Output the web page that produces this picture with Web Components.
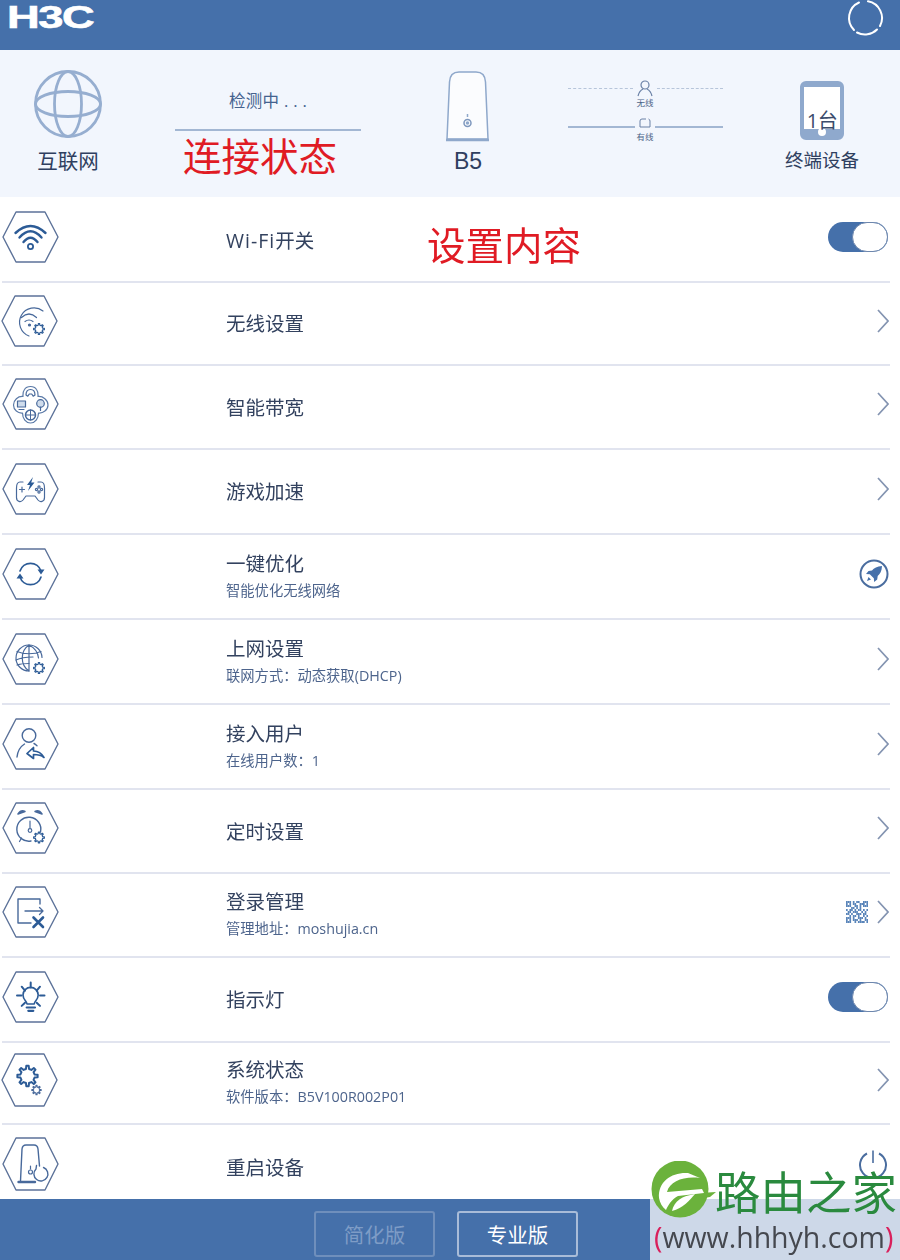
<!DOCTYPE html>
<html lang="zh"><head><meta charset="utf-8"><title>H3C B5</title>
<style>
html,body{margin:0;padding:0;background:#fff}
body{font-family:"Open Sans","Noto Sans CJK SC",sans-serif;color:#2f3f60}
</style></head><body>
<x-app>
  <x-topbar slot="top">H3C</x-topbar>
  <x-status slot="status"></x-status>
  <x-row icon="wifi" annot><span><span style="letter-spacing:1px">Wi-Fi</span>开关</span><x-note slot="annot">设置内容</x-note><x-toggle slot="control"></x-toggle></x-row>
  <x-row icon="wifigear"><span>无线设置</span><x-chevron slot="control"></x-chevron></x-row>
  <x-row icon="bandwidth"><span>智能带宽</span><x-chevron slot="control"></x-chevron></x-row>
  <x-row icon="game"><span>游戏加速</span><x-chevron slot="control"></x-chevron></x-row>
  <x-row icon="sync"><span>一键优化</span><span slot="sub">智能优化无线网络</span><x-glyph slot="control" name="rocket"></x-glyph></x-row>
  <x-row icon="globe"><span>上网设置</span><span slot="sub">联网方式：动态获取(DHCP)</span><x-chevron slot="control"></x-chevron></x-row>
  <x-row icon="user"><span>接入用户</span><span slot="sub">在线用户数：1</span><x-chevron slot="control"></x-chevron></x-row>
  <x-row icon="clock"><span>定时设置</span><x-chevron slot="control"></x-chevron></x-row>
  <x-row icon="login"><span>登录管理</span><span slot="sub">管理地址：moshujia.cn</span><x-glyph slot="control" name="qr"></x-glyph><x-chevron slot="control"></x-chevron></x-row>
  <x-row icon="bulb"><span>指示灯</span><x-toggle slot="control"></x-toggle></x-row>
  <x-row icon="gears"><span>系统状态</span><span slot="sub">软件版本：B5V100R002P01</span><x-chevron slot="control"></x-chevron></x-row>
  <x-row icon="reboot" last><span>重启设备</span><x-glyph slot="control" name="power"></x-glyph></x-row>
  <x-footer slot="footer"></x-footer>
  <x-watermark slot="over"></x-watermark>
</x-app>
<script>
/* A toothed gear outline: eight teeth between the radii ri and ro. */
const gear=(x,y,ri,ro,w=1.2,col='#2c5b96')=>{
  const pts=[];const n=8;
  for(let i=0;i<n;i++){
    const a=i/n*2*Math.PI, d=Math.PI/n*.5;
    [[ri,a-d*1.1],[ro,a-d*.6],[ro,a+d*.6],[ri,a+d*1.1]].forEach(([r,t])=>pts.push((x+r*Math.cos(t)).toFixed(2)+' '+(y+r*Math.sin(t)).toFixed(2)));
  }
  return `<path d="M${pts.join('L')}Z" stroke="${col}" stroke-width="${w}"/>`;
};
const ICONS={
wifi:`<g stroke="#2c5b96" stroke-width="2.400"><path d="M12.500 21Q27.500 7 42.500 21"/><path d="M16.500 25.500Q27.500 13 38.500 25.500"/><path d="M20.500 30Q27.500 21.500 34.500 30"/><circle cx="27.500" cy="34.500" r="2.600" stroke-width="1.800"/></g>`,
wifigear:`<path d="M41 15A14.500 14.500 0 1 0 27 40"/><path d="M19.500 21.500Q27 14.500 34.500 21.500M23 25.500Q27 22.500 31 25.500"/><circle cx="27.500" cy="29" r="1" fill="#48699b"/>${gear(37,33,3.800,5.400,1.200)}`,
bandwidth:`<path d="M21.500 10.500C24 6.500 31 6.500 33.500 10.500C35.500 13 35 15 35 17.500C40 17 45 21 45 26C45 31 40 34.500 35.500 34C35.500 39.500 32 44 27.500 44C23 44 19.500 39.500 19.500 34C15 34.500 10.500 31 10.500 26C10.500 21 15 17 20 17.500C20 15 19.500 13 21.500 10.500Z" stroke="#5c7ba8"/><path d="M23 16c0-4 2-5.500 4.500-5.500s4.500 1.500 4.500 5.500l-1.800 1.200-1.500-2.200h-2.400l-1.500 2.200z"/><rect x="14.500" y="22" width="8" height="6" fill="#cfdcec"/><path d="M16 30.500h5"/><circle cx="37.500" cy="24.500" r="3.800" fill="#cfdcec"/><path d="M37.500 28v3.500"/><circle cx="27.500" cy="36" r="5" stroke-width="1.500"/><path d="M27.500 31v10M22.500 36h10" stroke-width="1"/>`,
game:`<path d="M20 18h-3C14 18 13.500 21 13.500 24V33.500C13.500 38 18 38.500 20 36L23 32H32L35 36C37 38.500 41.500 38 41.500 33.500V24C41.500 21 41 18 38 18H35"/><path d="M16.500 25.500h5M19 23v5"/><circle cx="36" cy="23" r="1.100"/><circle cx="36" cy="28" r="1.100"/><circle cx="33.500" cy="25.500" r="1.100"/><circle cx="38.500" cy="25.500" r="1.100"/><path d="M30 13l-6 8h3l-2 6 6.500-8.500h-3.300z" fill="#2c5b96" stroke="none"/>`,
sync:`<g stroke="#2c5b96" stroke-width="1.700"><path d="M17 22A11 11 0 0 1 38 22"/><path d="M38 28A11 11 0 0 1 17 28"/></g><path d="M34.500 20.500h7l-3.500 5zM13.500 29.500h7l-3.500-5z" fill="#2c5b96" stroke="none"/>`,
globe:`<path d="M39 23.500A13 13 0 1 0 26 37"/><path d="M26 11v26M14 17.500c7 3 17 3 24 0M13 26c5-2.500 11-3 17-3M26 11c-9 6-9 20 0 26M26 11c6 3 9 8 9.500 13"/><path d="M14 31c3-1 8-1.500 12-1.500"/>${gear(36,34,3.800,5.400,1.200)}`,
user:`<circle cx="26" cy="16.500" r="6.800" stroke-width="1.400"/><path d="M14 38c.7-6 3.500-10.500 7.500-13M31 24.500c1 .5 2 1.300 3 2.200" stroke-width="1.400"/><path d="M24 34.500l6.500-6v3.500c4.500 0 8 2 10.500 6.500-3-2.500-6-3-10.500-3v4z" stroke="#2c5b96" stroke-width="1.700"/>`,
clock:`<path d="M37.500 29A12 12 0 1 0 28 38" stroke-width="1.400"/><path d="M27 18v7"/><circle cx="27" cy="27.500" r="1.800"/><path d="M15 11c2-3 5-3.500 7-2.500zM39 11c-2-3-5-3.500-7-2.500z" stroke-width="1.500"/><path d="M18.500 35l-2 3.500"/>${gear(36,34.500,3.800,5.400,1.200)}`,
login:`<path d="M37 17V12H15V36H28" stroke-width="1.400"/><path d="M22 24H40M36.500 20.500L40 24l-3.500 3.500" stroke-width="1.300"/><path d="M30.500 30.500l9.500 9.500M40 30.500l-9.500 9.500" stroke="#2c5b96" stroke-width="2.600"/>`,
bulb:`<g stroke="#2c5b96"><path d="M24 32c0-3-4-4-4-9a7.600 7.600 0 0 1 15.200 0c0 5-4 6-4 9z" stroke-width="1.600"/><path d="M23.700 35.500h8.300M25.300 38.800h5" stroke-width="2.200"/><g stroke-width="2"><path d="M27.700 10.500v5M18.700 14.700l3.300 4M37 14.700l-3.300 4M14 23.500h4.500M37 23.500h4.500M18.700 33.900l3.300-3.200M37 33.900l-3.300-3.200"/></g></g>`,
gears:`${gear(25.500,22,7.200,10.200,2)}${gear(34.500,36,3,4.700,1.100,'#48699b')}`,
reboot:`<path d="M17.500 43L19 11Q19.500 7 23 7H31Q34.500 7 35 11L36.500 28" stroke-width="1.400"/><path d="M15.500 44H32" stroke-width="2.400"/><circle cx="27.500" cy="34" r="2"/><path d="M27.500 28v3"/><path d="M33 31A7 7 0 1 0 40.500 29.500M33 31l.5-3.500" stroke-width="1.400"/>`
};
function def(name,css,html,extra){
  customElements.define(name,class extends HTMLElement{
    constructor(){super();const s=this.attachShadow({mode:'open'});s.innerHTML=`<style>${css}</style>${typeof html==='function'?html(this):html}`;}
    connectedCallback(){if(extra)extra(this)}
  });
}
def('x-app',`:host{display:block;width:900px;height:1260px;position:relative;overflow:hidden;filter:blur(.35px)}
.p{display:grid;grid-template-rows:50px 147px 1002px 61px;height:100%}
main{display:grid;grid-template-rows:86px 83px 84px 85px 85px 85px 85px 84px 84px 85px 82px 84px;overflow:hidden;min-height:0}`,
`<div class="p"><slot name="top"></slot><slot name="status"></slot><main><slot></slot></main><slot name="footer"></slot></div><slot name="over"></slot>`);

def('x-topbar',`:host{display:flex;justify-content:space-between;align-items:flex-start;background:#4570aa;height:50px}
.logo{color:#fff;font:bold 31px/34px "Liberation Sans",sans-serif;margin:1px 0 0 7px;-webkit-text-stroke:.6px #fff;transform:scaleX(1.46);transform-origin:left top;letter-spacing:-1px}
svg{margin:-1px 16px 0 0}`,
`<div class="logo"><slot></slot></div><svg width="38" height="38" viewBox="0 0 38 38" fill="none" stroke="#fff" stroke-width="2" stroke-linecap="round"><path d="M22 2.300A17 17 0 0 1 34 27"/><path d="M31 30.500A17 17 0 0 1 11 33.500"/><path d="M8 31A17 17 0 0 1 13 3.500"/></svg>`);

def('x-status',`:host{display:grid;grid-template-columns:136px 264px 136px 218px 136px 10px;background:#f2f6fd;height:147px;color:#2f3f60;overflow:hidden}
.c{display:flex;flex-direction:column;align-items:center}
.lb{font-size:20.500px;line-height:30px;white-space:nowrap}
.chk{font-size:16.500px;line-height:28px;color:#44628f;margin-top:37px;letter-spacing:.3px;white-space:nowrap}
.ln{width:186px;height:2px;background:#a3b7d3;margin-top:14px;flex:none}
.red{font-size:38.500px;line-height:50px;color:#e01b24;white-space:nowrap;margin-right:16px}
.lk{display:flex;align-items:center;width:155px;gap:3px;height:18px}
.lk i{flex:1;height:0;border-top:2px solid #a3b7d3}
.lk.d i{border-top:1px dashed #b7c5da}
.tiny{font-size:8.500px;line-height:12px;color:#4d6488}
.tab{box-sizing:border-box;width:44px;height:59px;border:4px solid #8fa9cd;border-radius:6px;margin-top:31px;background:#fff;display:flex;flex-direction:column;justify-content:flex-end;align-items:center;border-top-width:6px}
.tab b{font-weight:400;font-size:20px;line-height:22px;color:#3b4c6c;margin-bottom:-3px;white-space:nowrap;position:relative;z-index:1;letter-spacing:-.5px}
.tab u{display:block;width:100%;height:7px;background:#8fa9cd;flex:none;position:relative}
.tab u::after{content:"";position:absolute;left:14px;top:-1px;width:8px;height:8px;border-radius:50%;background:#fff}
.b5{font-family:"Liberation Sans",sans-serif;font-size:23px}`,
`<div class="c"><svg style="margin-top:19px" width="70" height="70" viewBox="0 0 70 70" fill="none" stroke="#96aed0" stroke-width="2.800"><circle cx="35" cy="35" r="32.500"/><ellipse cx="35" cy="35" rx="13.500" ry="32.500"/><ellipse cx="35" cy="35" rx="32.500" ry="12.500"/></svg><div class="lb" style="margin-top:7px">互联网</div></div>
<div class="c"><div class="chk">检测中 . . .</div><div class="ln"></div><div class="red">连接状态</div></div>
<div class="c"><svg style="margin-top:20px" width="46" height="72" viewBox="0 0 46 72" fill="none" stroke="#8fa8cb" stroke-width="1.500"><path d="M2 69L4.500 12Q5 2 14 2H31Q40 2 40.500 12L43 69Z" fill="#fbfcfe"/><path d="M1 70H44" stroke-width="2.400"/><circle cx="22.500" cy="53" r="3.500" stroke="#7d97bd"/><circle cx="22.500" cy="53" r="1" fill="#7d97bd"/><path d="M22.500 44v3"/></svg><div class="lb b5" style="margin-top:4px">B5</div></div>
<div class="c" style="padding-top:29px"><div class="lk d"><i></i><svg width="18" height="18" viewBox="0 0 18 18" fill="none" stroke="#6a81a6" stroke-width="1.200"><circle cx="9" cy="6" r="4"/><path d="M2 17C3 13 5 11 7 10M16 17C15 13 13 11 11 10"/></svg><i></i></div><div class="tiny">无线</div><div class="lk" style="margin-top:9px"><i></i><svg style="transform:translateY(-4px)" width="14" height="14" viewBox="0 0 14 14" fill="none" stroke="#6a81a6" stroke-width="1"><path d="M2 11V5Q2 3 4 3H8M10.500 3Q12 3.500 12 5V11H2"/></svg><i></i></div><div class="tiny" style="margin-top:-5px">有线</div></div>
<div class="c"><div class="tab"><b>1台</b><u></u></div><div class="lb" style="margin-top:5px;font-size:18.500px">终端设备</div></div><div></div>`);

def('x-row',`:host{display:flex;align-items:center;box-sizing:border-box;margin:0 10px 0 2px;border-bottom:2px solid #e1e4ef;min-width:0;color:#33425f}
:host([last]){border-bottom:0}
:host([annot]){padding-top:2px}
.h{flex:none;display:block;margin-bottom:6px}
.t{margin-left:167px;flex:1;display:flex;flex-direction:column;font-size:19.500px;line-height:30px;white-space:nowrap;margin-bottom:2px}
:host([annot]) .t{flex:0 0 202px}
.s{font-size:14.300px;line-height:24px;color:#4d648c;display:block}
.gap{flex:1}
.ctl{display:flex;align-items:center;gap:9px;margin-bottom:6px;padding-right:2px}`,
(el)=>{
 const n=el.getAttribute('icon');const tall=['reboot','gears'].includes(n);const sh=['gears','wifigear'].includes(n)?'margin-left:-1px;margin-right:1px':'';
 return `<svg class="h" style="${sh}" width="57" height="${tall?54:52}" viewBox="-1 -1 57 ${tall?54:52}" fill="none" stroke="#48699b" stroke-width="1.200" stroke-linecap="round" stroke-linejoin="round"><path d="M13 0H42L55 ${tall?26:25}L42 ${tall?52:50}H13L0 ${tall?26:25}Z" stroke="#5c7299" stroke-width="1.400"/>${ICONS[n]||''}</svg>
 <div class="t"><div><slot></slot></div><div class="s"><slot name="sub"></slot></div></div><slot name="annot"></slot><div class="gap"></div><div class="ctl"><slot name="control"></slot></div>`;},
 (el)=>{ if(!el.querySelector('[slot=sub]')){const r=el.shadowRoot;r.querySelector('.s').style.display='none';const t=r.querySelector('.t');t.style.marginBottom='0';t.style.marginTop='1px';} });

def('x-note',`:host{display:block;font-size:38.500px;line-height:50px;color:#e01b24;white-space:nowrap;margin:10px 0 0 -1px}`,`<slot></slot>`);
def('x-toggle',`:host{display:block;width:60px;height:30px;box-sizing:border-box;border-radius:15px;background:#4570aa;position:relative;flex:none}
i{position:absolute;right:0;top:0;width:36px;height:30px;box-sizing:border-box;border:1.500px solid #6e87ad;border-radius:15px;background:#fff}`,`<i></i>`);
def('x-chevron',`:host{display:block;width:12px;height:24px;flex:none;margin-right:-1px}svg{display:block}`,`<svg width="12" height="24" viewBox="0 0 12 24" fill="none" stroke="#8494b1" stroke-width="1.700"><path d="M1 1L11 12L1 23"/></svg>`);
const qr=()=>{const m=["1110101100111","1010110011101","1110011010111","0001101010000","1011010110101","0110111001010","1101001110110","0010110100101","1110100111010","1010111010011","1110010111101"];let r='';m.forEach((l,y)=>[...l].forEach((c,x)=>{if(c==='1')r+=`<rect x="${x*1.700}" y="${y*2}" width="1.700" height="2"/>`}));return `<svg width="22" height="22" viewBox="0 0 22 22" fill="#5a85ba" style="display:block">${r}</svg>`};
def('x-glyph',`:host{display:block;flex:none}svg{display:block}`,(el)=>{
 const n=el.getAttribute('name');
 if(n==='qr')return qr();
 if(n==='rocket')return `<svg style="margin-right:-1px" width="30" height="30" viewBox="0 0 30 30"><circle cx="15" cy="15" r="13.500" fill="#fff" stroke="#4a6d9f" stroke-width="2"/><path d="M23 7c-5 .3-8 2-10 4.500l-3.500.5-2.500 3 3.800.3 4 4 .4 3.800 3-2.500.5-3.500C21 15 22.800 12 23 7zM9.500 18l2.500 2.500-4 1.500z" fill="#4570aa"/></svg>`;
 return `<svg width="30" height="30" viewBox="0 0 30 30" fill="none" stroke="#4a6d9f" stroke-width="2"><path d="M9 4.500A13 13 0 1 0 21 4.500"/><path d="M15 1.500V14" stroke-width="1.600"/></svg>`;});
def('x-footer',`:host{display:flex;justify-content:center;align-items:flex-start;gap:22px;background:#4570aa;height:61px;box-sizing:border-box;padding:12px 8px 0 0}
button{all:unset;box-sizing:border-box;width:121px;height:46px;border:2px solid #a9bcd8;border-radius:3px;color:#fff;font:20.500px/42px "Noto Sans CJK SC",sans-serif;text-align:center}
button.off{border-color:#6f8fbc;color:#7e9cc6}`,`<button class="off">简化版</button><button>专业版</button>`);
def('x-watermark',`:host{position:absolute;left:650px;top:1161px;width:250px;height:99px;display:block;pointer-events:none}
.b{position:absolute;left:0;right:0;top:38px;bottom:0;background:#cdd8e8}
svg{position:absolute;left:0;top:0}
.n{position:absolute;left:65px;top:3px;font:400 45.500px/52px "Noto Sans CJK SC",sans-serif;color:#2a8a3e;white-space:nowrap}
.u{position:absolute;left:4px;top:57px;font:28.500px/38px "Open Sans",sans-serif;color:#45484f;white-space:nowrap}
.u b{font-weight:400;color:#d9205c}`,
`<div class="b"></div><svg width="70" height="60" viewBox="0 0 70 60"><circle cx="30" cy="28" r="28.500" fill="#6bb23c"/><path d="M50 32L66 31 60 36 48 38z" fill="#6bb23c"/><path d="M9 37C8 20 22 11 38 12L50 17C34 15 20 20 17 31L52 28 54 32 28 35C22 38 18 44 16 49 12 46 10 42 9 37Z" fill="#fff"/><path d="M22 50C24 40 32 35 45 33 40 39 33 47 22 50Z" fill="#fff"/></svg>
<div class="n">路由之家</div><div class="u"><b>(</b>www.hhhyh.com<b>)</b></div>`);
</script>
</body></html>
